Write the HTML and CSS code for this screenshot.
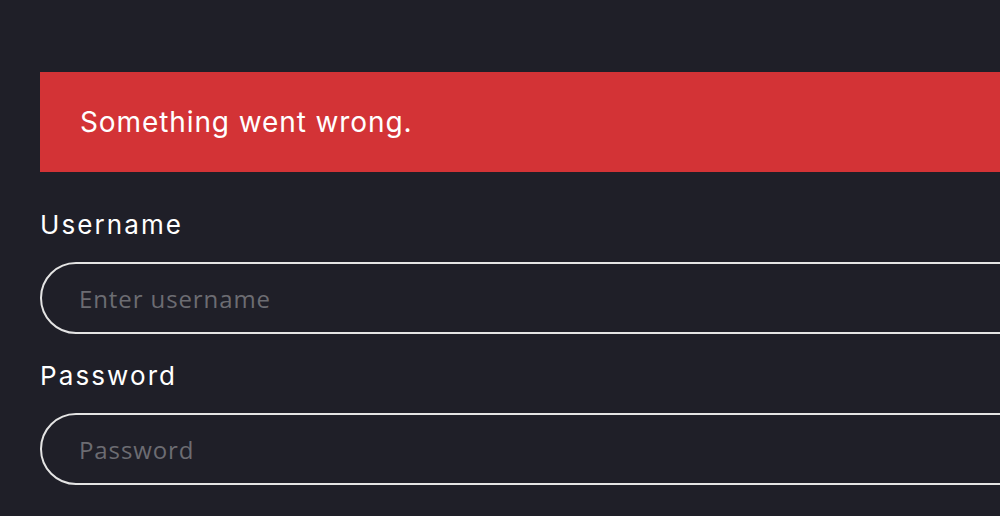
FILE: index.html
```html
<!DOCTYPE html>
<html lang="en">
<head>
<meta charset="utf-8">
<title>Login</title>
<link rel="stylesheet" href="styles.css">
</head>
<body>
<main class="page">
  <div class="alert">Something went wrong.</div>
  <form class="form">
    <label class="label" for="username">Username</label>
    <input class="field" id="username" type="text" placeholder="Enter username">
    <label class="label" for="password">Password</label>
    <input class="field" id="password" type="password" placeholder="Password">
  </form>
</main>
</body>
</html>
```
FILE: styles.css
```css
html, body {
  margin: 0;
  padding: 0;
  background: #1f1f28;
  overflow: hidden;
}
.page {
  width: 1200px;
  padding: 72px 0 0 40px;
  font-family: Inter, "Noto Sans", sans-serif;
  color: #ffffff;
}
.alert {
  height: 100px;
  background: #d33336;
  display: flex;
  align-items: center;
  padding-left: 40px;
  font-size: 28px;
  letter-spacing: 0.9px;
  font-weight: 400;
}
.form {
  display: flex;
  flex-direction: column;
  padding-top: 35px;
}
.label {
  font-size: 26px;
  line-height: 36px;
  letter-spacing: 2.1px;
  margin-bottom: 19px;
}
.field {
  box-sizing: border-box;
  height: 72px;
  width: 100%;
  border: 2px solid #e4e4e4;
  border-radius: 36px;
  background: transparent;
  padding: 0 0 0 37px;
  font-family: "Open Sans", sans-serif;
  font-size: 24px;
  letter-spacing: 0.9px;
  color: #fff;
  margin-bottom: 24px;
  outline: none;
}
.field::placeholder {
  color: #6c6c72;
}
```
